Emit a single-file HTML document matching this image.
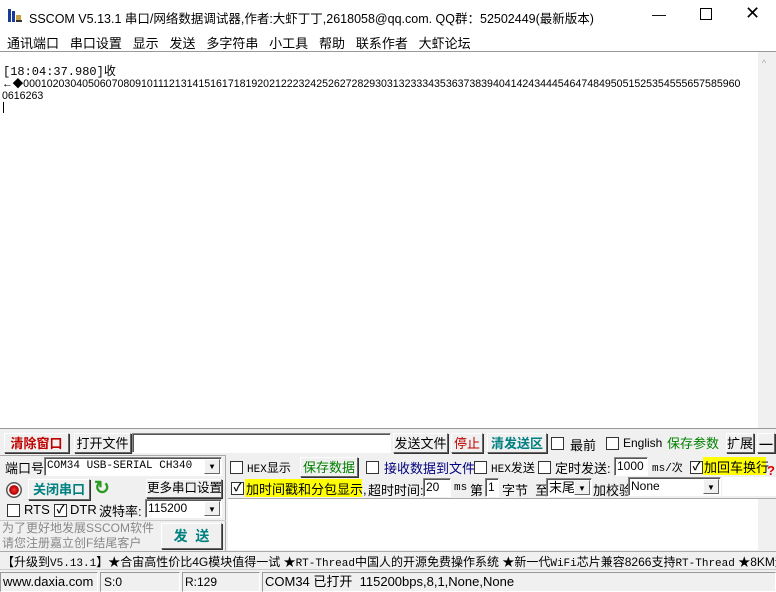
<!DOCTYPE html><html><head><meta charset="utf-8"><style>
*{margin:0;padding:0;box-sizing:border-box}
body{width:776px;height:592px;background:#f0f0f0;font-family:"Liberation Sans","Noto Sans CJK SC",sans-serif;font-size:12px;color:#000;position:relative;overflow:hidden}
.a{position:absolute;white-space:nowrap}
.btn{position:absolute;background:#f0f0f0;border:1px solid;border-color:#fff #666 #666 #fff;box-shadow:1px 1px 0 #333;text-align:center;font-size:13px;line-height:19px;white-space:nowrap;overflow:hidden}
.in{position:absolute;background:#fff;border:1px solid;border-color:#888 #fff #fff #888;box-shadow:inset 1px 1px 0 #555;font-size:12px;line-height:17px;padding-left:2px;white-space:nowrap}
.cb{position:absolute;width:13px;height:13px;background:#fff;border:1px solid #333;font-size:11px;line-height:11px;text-align:center;font-weight:bold}
.dd{position:absolute;right:1px;top:1px;bottom:1px;width:16px;background:#f0f0f0;border:1px solid;border-color:#fff #666 #666 #fff;font-size:8px;text-align:center;line-height:15px}
.mono{font-family:"Liberation Mono","Noto Sans CJK SC",monospace}
</style></head><body>
<div class="a" style="left:0;top:0;width:776px;height:52px;background:#fff"></div>
<div class="a" style="left:7px;top:7px;width:16px;height:16px">
<svg width="16" height="16"><rect x="1" y="2" width="3" height="13" fill="#1a3a9a"/><rect x="5" y="4" width="3" height="11" fill="#1a3a9a"/><rect x="9" y="8" width="5" height="7" fill="#c8a040"/><rect x="9" y="13" width="6" height="2" fill="#333"/></svg></div>
<div class="a" style="left:29px;top:8px;font-size:12.5px">SSCOM V5.13.1 串口/网络数据调试器,作者:大虾丁丁,2618058@qq.com. QQ群：52502449(最新版本)</div>
<div class="a" style="left:652px;top:6px;font-size:14px">—</div>
<div class="a" style="left:700px;top:8px;width:12px;height:12px;border:1px solid #000"></div>
<div class="a" style="left:745px;top:3px;font-size:18px">✕</div>
<div class="a" style="left:7px;top:33px;font-size:13px">通讯端口&nbsp;&nbsp;&nbsp;串口设置&nbsp;&nbsp;&nbsp;显示&nbsp;&nbsp;&nbsp;发送&nbsp;&nbsp;&nbsp;多字符串&nbsp;&nbsp;&nbsp;小工具&nbsp;&nbsp;&nbsp;帮助&nbsp;&nbsp;&nbsp;联系作者&nbsp;&nbsp;&nbsp;大虾论坛</div>
<div class="a" style="left:0;top:51px;width:776px;height:378px;background:#fff;border-top:1px solid #999;border-bottom:1px solid #999"></div>
<div class="a" style="left:758px;top:52px;width:18px;height:376px;background:#f0f0f0"></div>
<div class="a" style="left:762px;top:58px;font-size:9px;color:#aaa">^</div>
<div class="a mono" style="left:3px;top:65px;font-size:12px;line-height:14px">[18:04:37.980]收</div>
<div class="a" style="left:2px;top:78px;font-size:10.6px;line-height:12px">←◆00010203040506070809101112131415161718192021222324252627282930313233343536373839404142434445464748495051525354555657585960<br>0616263</div>
<div class="a" style="left:3px;top:102px;width:1px;height:11px;background:#000"></div>

<div class="btn" style="left:4px;top:433px;width:65px;height:20px;color:#c00000;font-weight:bold">清除窗口</div>
<div class="btn" style="left:74px;top:433px;width:57px;height:20px">打开文件</div>
<div class="in" style="left:132px;top:433px;width:259px;height:20px"></div>
<div class="btn" style="left:393px;top:433px;width:55px;height:20px">发送文件</div>
<div class="btn" style="left:451px;top:433px;width:32px;height:20px;color:#c00000">停止</div>
<div class="btn" style="left:487px;top:433px;width:60px;height:20px;color:#008080;font-weight:bold">清发送区</div>
<div class="cb" style="left:551px;top:437px"></div><div class="a" style="left:570px;top:435px;font-size:13px">最前</div>
<div class="cb" style="left:606px;top:437px"></div><div class="a" style="left:623px;top:436px;font-size:12px">English</div>
<div class="btn" style="left:665px;top:433px;width:56px;height:20px;color:#008000;box-shadow:none;border-color:#f0f0f0">保存参数</div>
<div class="btn" style="left:726px;top:433px;width:28px;height:20px">扩展</div>
<div class="btn" style="left:757px;top:433px;width:18px;height:20px;font-weight:bold">—</div>

<div class="a" style="left:0;top:455px;width:226px;height:96px;border-top:1px solid #aaa;border-right:1px solid #aaa"></div>
<div class="a" style="left:5px;top:458px;font-size:13px">端口号</div>
<div class="in mono" style="left:44px;top:457px;width:178px;height:19px;font-size:11px">COM34 USB-SERIAL CH340<div class="dd">▼</div></div>
<div class="a" style="left:6px;top:482px;width:16px;height:16px;border-radius:50%;background:radial-gradient(circle,#f33 0,#a00 40%,#fff 45%,#fff 55%,#555 60%)"></div>
<div class="btn" style="left:28px;top:479px;width:62px;height:21px;color:#008080;font-weight:bold">关闭串口</div>
<div class="a" style="left:94px;top:477px;font-size:19px;color:#2a9a20;font-weight:bold">↻</div>
<div class="btn" style="left:146px;top:479px;width:76px;height:19px;font-size:12.5px;line-height:17px">更多串口设置</div>
<div class="cb" style="left:7px;top:504px"></div><div class="a" style="left:24px;top:502px;font-size:13px">RTS</div>
<div class="cb" style="left:54px;top:504px">✓</div><div class="a" style="left:70px;top:502px;font-size:13px">DTR</div>
<div class="a" style="left:99px;top:501px;font-size:13px">波特率:</div>
<div class="in" style="left:145px;top:499px;width:77px;height:19px">115200<div class="dd">▼</div></div>
<div class="a" style="left:0;top:520px;width:226px;border-top:1px solid #ccc"></div>
<div class="a" style="left:2px;top:521px;font-size:12px;line-height:15px;color:#888">为了更好地发展SSCOM软件<br>请您注册嘉立创F结尾客户</div>
<div class="btn" style="left:161px;top:523px;width:61px;height:26px;line-height:24px;color:#008080;font-weight:bold;font-size:14px">发&nbsp;&nbsp;送</div>

<div class="cb" style="left:230px;top:461px"></div><div class="a mono" style="left:247px;top:459px;font-size:11px">HEX<span style="font-size:12px">显示</span></div>
<div class="btn" style="left:300px;top:457px;width:58px;height:20px;color:#008000">保存数据</div>
<div class="cb" style="left:366px;top:461px"></div><div class="a" style="left:384px;top:458px;color:#000080;font-size:13px">接收数据到文件</div>
<div class="cb" style="left:474px;top:461px"></div><div class="a mono" style="left:491px;top:459px;font-size:11px">HEX<span style="font-size:12px">发送</span></div>
<div class="cb" style="left:538px;top:461px"></div><div class="a" style="left:555px;top:458px;font-size:13px">定时发送:</div>
<div class="in" style="left:614px;top:457px;width:34px;height:19px">1000</div>
<div class="a mono" style="left:652px;top:459px;font-size:11px">ms/次</div>
<div class="cb" style="left:690px;top:461px">✓</div>
<div class="a" style="left:703px;top:457px;width:63px;height:18px;background:#ff0;font-size:13px;padding-left:1px">加回车换行</div>
<div class="a" style="left:767px;top:463px;color:#d00;font-weight:bold;font-size:13px">?</div>
<div class="cb" style="left:231px;top:482px">✓</div>
<div class="a" style="left:245px;top:479px;width:117px;height:18px;background:#ff0;font-size:13px;padding-left:1px">加时间戳和分包显示,</div>
<div class="a" style="left:368px;top:480px;font-size:13px">超时时间:</div>
<div class="in" style="left:423px;top:478px;width:28px;height:19px">20</div>
<div class="a mono" style="left:454px;top:482px;font-size:11px">ms</div>
<div class="a" style="left:470px;top:480px;font-size:13px">第</div>
<div class="in" style="left:485px;top:478px;width:14px;height:19px">1</div>
<div class="a" style="left:502px;top:480px;font-size:13px">字节&nbsp;&nbsp;至</div>
<div class="in" style="left:546px;top:478px;width:46px;height:19px;font-size:13px">末尾<div class="dd">▼</div></div>
<div class="a" style="left:593px;top:480px;font-size:13px">加校验</div>
<div class="in" style="left:628px;top:477px;width:93px;height:19px">None<div class="dd">▼</div></div>
<div class="a" style="left:722px;top:477px;width:54px;height:19px;background:#fff"></div>
<div class="a" style="left:228px;top:498px;width:548px;height:52px;background:#fff;border-top:1px solid #aaa"></div>
<div class="a" style="left:758px;top:499px;width:18px;height:51px;background:#f0f0f0"></div>

<div class="a" style="left:0;top:551px;width:776px;height:19px;border-top:1px solid #aaa;border-bottom:1px solid #ccc"></div>
<div class="a" style="left:2px;top:553px;font-size:12px">【升级到<span class="mono" style="font-size:11px">V5.13.1</span>】★合宙高性价比4G模块值得一试 ★<span class="mono" style="font-size:11px">RT-Thread</span>中国人的开源免费操作系统 ★新一代<span class="mono" style="font-size:11px">WiFi</span>芯片兼容8266支持<span class="mono" style="font-size:11px">RT-Thread</span> ★8KM远距</div>

<div class="a" style="left:0;top:572px;width:98px;height:20px;border:1px solid;border-color:#999 #fff #fff #999;font-size:13px;line-height:18px;padding-left:2px">www.daxia.com</div>
<div class="a" style="left:100px;top:572px;width:80px;height:20px;border:1px solid;border-color:#999 #fff #fff #999;font-size:12px;line-height:18px;padding-left:3px">S:0</div>
<div class="a" style="left:182px;top:572px;width:78px;height:20px;border:1px solid;border-color:#999 #fff #fff #999;font-size:12px;line-height:18px;padding-left:2px">R:129</div>
<div class="a" style="left:262px;top:572px;width:514px;height:20px;border:1px solid;border-color:#999 #fff #fff #999;font-size:13px;line-height:18px;padding-left:2px">COM34 已打开&nbsp;&nbsp;115200bps,8,1,None,None</div>
</body></html>
